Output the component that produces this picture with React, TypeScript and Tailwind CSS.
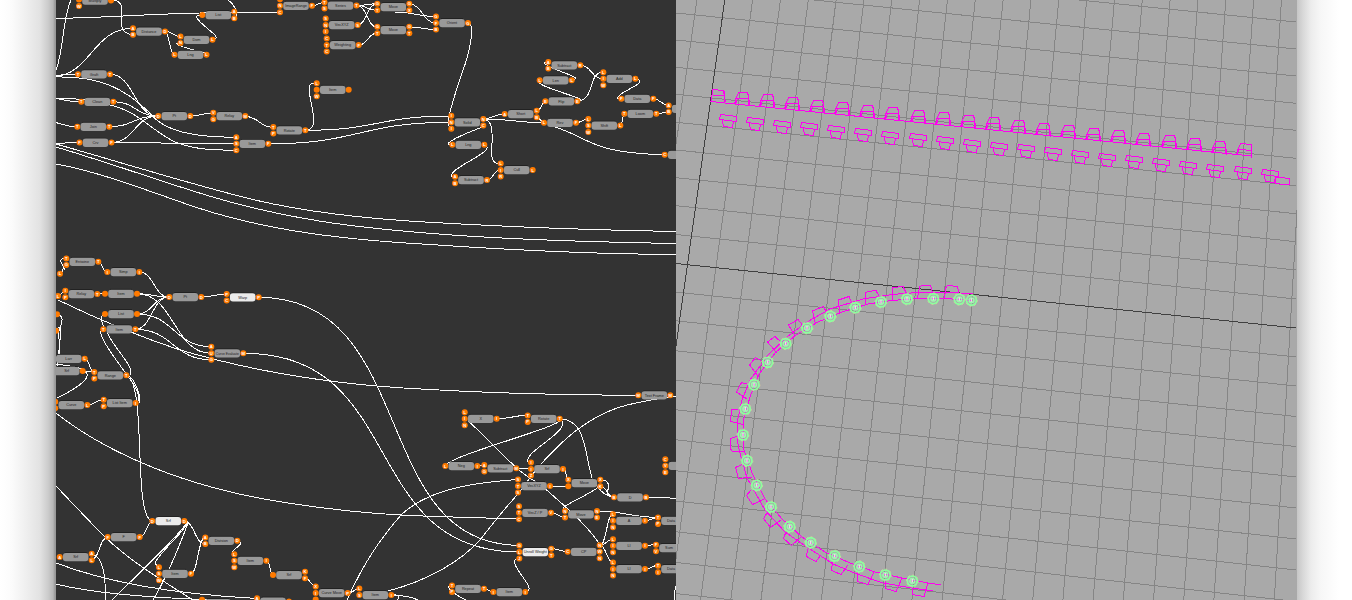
import React from "react";

type GraphNode = { x: number; y: number; t: string; l?: number[]; r?: number[]; p?: string; on?: boolean };

// l / r hold the vertical offsets of the input and output ports; p holds their letters.
const S = [0];
const D = [-3.2, 3.2];
const T = [-6.5, 0, 6.5];

const nodes: GraphNode[] = [
  { x: 95, y: 0.5, t: "Multiply", l: [-1, 5.5], r: S, p: "AWL" },
  { x: 149, y: 31.5, t: "Distance", l: D, r: S, p: "ABD" },
  { x: 218.3, y: 15, t: "List", l: S, r: D, p: " AB" },
  { x: 196.5, y: 39.7, t: "Dom", l: D, r: S, p: "LNL" },
  { x: 190.5, y: 54.7, t: "Lng", l: S, r: S, p: "LL" },
  { x: 94, y: 74.3, t: "Graft", l: S, r: S, p: "TT" },
  { x: 97.3, y: 101.7, t: "Clean", l: S, r: S, p: "TT" },
  { x: 93.3, y: 126.7, t: "Join", l: S, r: S, p: "TT" },
  { x: 95.5, y: 142.6, t: "Crv", l: S, r: S, p: "FF" },
  { x: 174.3, y: 116, t: "Pt", l: S, r: S, p: "DD" },
  { x: 229.3, y: 116, t: "Relay", l: D, r: S, p: "VGM" },
  { x: 289.3, y: 130.3, t: "Rotate", l: D, r: S, p: "TPT" },
  { x: 252.3, y: 143.8, t: "Item", l: T, r: S, p: "ASCF" },
  { x: 332.7, y: 89.7, t: "Item", l: T, r: S, p: "L W " },
  { x: 296, y: 5.7, t: "ImageRange", l: [-6.5, 0, 6.5], r: S, p: "ANCF" },
  { x: 340.5, y: 5.4, t: "Series", l: D, r: S, p: "TST" },
  { x: 341.7, y: 25, t: "VecXYZ", l: T, r: S, p: "SNIS" },
  { x: 342.7, y: 45, t: "Weighting", l: T, r: S, p: "CTCF" },
  { x: 393.3, y: 7, t: "Move", l: D, r: D, p: "GTGX" },
  { x: 393.3, y: 30, t: "Move", l: D, r: D, p: "GTGT" },
  { x: 452, y: 23, t: "Orient", l: T, r: S, p: "GFBG" },
  { x: 467.3, y: 122.3, t: "Solid", l: T, r: D, p: "ININC" },
  { x: 468.3, y: 144.7, t: "Lng", l: S, r: S, p: "LL" },
  { x: 471, y: 180, t: "Subtract", l: D, r: S, p: "ABR" },
  { x: 516.7, y: 170, t: "Cull", l: T, r: S, p: "LIRL" },
  { x: 520.7, y: 114, t: "Short", l: S, r: D, p: "ALB" },
  { x: 564.3, y: 65.3, t: "Subtract", l: D, r: S, p: "ABR" },
  { x: 555.7, y: 80.3, t: "Len", l: S, r: S, p: "LL" },
  { x: 561.3, y: 101.3, t: "Flip", l: S, r: S, p: "EE" },
  { x: 560, y: 122.7, t: "Rev", l: S, r: S, p: "LF" },
  { x: 619.3, y: 78.7, t: "Add", l: T, r: S, p: "LIWL" },
  { x: 637.3, y: 98.7, t: "Data", l: S, r: S, p: "FF" },
  { x: 640.3, y: 113.7, t: "Loom", l: S, r: S, p: "TT" },
  { x: 604.3, y: 125.5, t: "Shift", l: T, r: S, p: "LSWL" },
  { x: 684.7, y: 108.7, t: "", l: D, p: "AB" },
  { x: 680.7, y: 154.7, t: "", l: S, p: "C" },
  { x: 82.3, y: 261.7, t: "Entwine", l: D, r: S, p: "TGT" },
  { x: 123.3, y: 272, t: "Simp", l: S, r: S, p: "II" },
  { x: 81.3, y: 294, t: "Relay", l: D, r: S, p: "IPT" },
  { x: 121, y: 293.7, t: "Item", l: S, r: S, p: "  " },
  { x: 185.3, y: 297, t: "Pt", l: S, r: S, p: "DD" },
  { x: 242.7, y: 297.3, t: "Warp", l: D, r: S, p: "PCP", on: true },
  { x: 121, y: 314, t: "List", l: S, r: S, p: "  " },
  { x: 119.3, y: 329.3, t: "Item", l: S, r: S, p: "TT" },
  { x: 227.3, y: 353.3, t: "Curve Evaluate", l: T, r: S, p: "AUGM" },
  { x: 68.7, y: 358.7, t: "Larr", r: S, p: "L" },
  { x: 66.7, y: 371, t: "Srf", r: S, p: " " },
  { x: 110.3, y: 375.3, t: "Range", l: D, r: S, p: "TPT" },
  { x: 71.3, y: 405, t: "Curve", l: D, r: S, p: "  L" },
  { x: 119.7, y: 403, t: "List Item", l: D, r: S, p: "TPI" },
  { x: 168.3, y: 521, t: "Srf", l: S, r: S, p: "DD", on: true },
  { x: 123.7, y: 537, t: "F", l: S, r: S, p: "FF" },
  { x: 75.7, y: 557, t: "Srf", l: S, r: D, p: "AAL" },
  { x: 175, y: 573.7, t: "Item", l: T, r: S, p: "LSWF" },
  { x: 221.3, y: 540.7, t: "Division", l: D, r: S, p: "ABD" },
  { x: 250.3, y: 560.7, t: "Item", l: T, r: S, p: "LSWI" },
  { x: 289, y: 575, t: "Srf", l: S, r: D, p: " KF" },
  { x: 331.7, y: 593, t: "Curve Move", l: T, r: S, p: "XI P" },
  { x: 375.3, y: 595, t: "Item", l: [-6.5, 0], r: S, p: "LSI" },
  { x: 273, y: 601.5, t: "", l: D, r: S, p: "A  " },
  { x: 218, y: 603, t: "", l: D, r: S, p: "   " },
  { x: 654.3, y: 395.3, t: "Text Frame", l: S, r: S, p: "MM" },
  { x: 480.7, y: 418.7, t: "X", l: T, r: S, p: "LINI" },
  { x: 543.7, y: 418.7, t: "Rotate", l: D, r: S, p: "TPT" },
  { x: 461.3, y: 466, t: "Neg", l: S, r: S, p: "LI" },
  { x: 500.3, y: 468.3, t: "Subtract", l: D, r: S, p: "AGM" },
  { x: 547, y: 469, t: "Srf", l: T, r: S, p: "IIZI" },
  { x: 534, y: 486, t: "VecXYZ", l: T, r: S, p: "STSI" },
  { x: 584.3, y: 483, t: "Move", l: D, r: D, p: "X XK" },
  { x: 630, y: 497.3, t: "D", l: S, r: S, p: "BB" },
  { x: 535, y: 512.7, t: "VecZ / P", l: T, r: S, p: "STCV" },
  { x: 581, y: 514.3, t: "Move", l: D, r: D, p: "NTNE" },
  { x: 629, y: 520.7, t: "A", l: T, r: S, p: "LINI" },
  { x: 629, y: 545.7, t: "LI", l: T, r: S, p: "LINI" },
  { x: 629, y: 569, t: "LI", l: T, r: S, p: "LINI" },
  { x: 535.3, y: 552, t: "Unroll Weight", l: T, r: D, p: "GLJGT", on: true },
  { x: 583.7, y: 551.7, t: "CP", l: S, r: T, p: "CNWN" },
  { x: 468, y: 588.7, t: "Repeat", l: D, r: S, p: "TPT" },
  { x: 509.3, y: 592, t: "Item", l: S, r: S, p: "II" },
  { x: 674, y: 520.7, t: "Data", l: D, p: "TP" },
  { x: 672, y: 548, t: "Sum", l: D, p: "FV" },
  { x: 674, y: 569, t: "Data", l: D, p: "TI" },
  { x: 681.3, y: 465.7, t: "", l: T, p: "CVE" },
];

const strayPorts: [number, number, string][] = [
  [60, 273.7, "L"],
  [58, 296, "L"],
  [57, 314.3, ""],
  [56, 330.7, ""],
];

// Wires that run left to right with level ends.
const links: [number, number, number, number][] = [
  [165, 31.3, 180, 36.5],
  [165, 31.3, 174, 54.7],
  [50, 77, 133, 28.3],
  [40, 76, 78, 74.3],
  [40, 97, 81, 101.7],
  [40, 120, 77, 126.7],
  [40, 144, 79, 142.6],
  [110, 74.3, 158, 116],
  [113, 101.7, 158, 116],
  [109, 126.7, 158, 116],
  [111, 142.6, 158, 116],
  [111, 142.6, 236, 143.8],
  [190, 116, 213, 113],
  [245, 116.3, 273, 127.3],
  [312, 5.7, 324, 2.5],
  [357, 5.4, 377, 3.8],
  [357, 5.4, 377, 10.4],
  [357, 5.4, 377, 27],
  [357, 25, 377, 3.8],
  [359, 45, 377, 33],
  [409, 4, 436, 23],
  [409, 27, 436, 29.5],
  [395, 12, 436, 16.5],
  [305, 130.3, 451, 116],
  [268, 143.8, 451, 122.3],
  [483, 119, 504, 114],
  [483, 119, 545, 122.7],
  [487, 180, 500, 170],
  [537, 110.5, 546, 101.3],
  [537, 117.5, 544, 122.7],
  [580, 65.3, 603, 78.7],
  [576, 122.7, 588, 119],
  [620, 125.5, 625, 113.7],
  [653, 98.7, 669, 105.5],
  [656, 113.7, 669, 112],
  [60, 273.7, 66, 264.7],
  [98, 261.7, 107, 272],
  [58, 296, 65, 291],
  [97, 294, 105, 293.7],
  [139, 272, 169, 297],
  [137, 293.7, 169, 297],
  [137, 314, 169, 297],
  [135, 329.3, 169, 297],
  [137, 293.7, 211, 353.3],
  [137, 314, 211, 346.7],
  [135, 329.3, 211, 359.7],
  [201, 297, 227, 294],
  [85, 358.7, 94, 372],
  [83, 371, 94, 372],
  [87, 405, 104, 399.7],
  [140, 537, 153, 521],
  [184, 521, 205, 543.7],
  [191, 573.7, 205, 537.3],
  [267, 560.7, 273, 575],
  [305, 578.5, 316, 586.3],
  [348, 593, 360, 588.5],
  [91, 560, 108, 537],
  [497, 418.7, 528, 415.3],
  [477, 466, 484, 465.3],
  [516, 468.3, 531, 469],
  [564, 469, 568, 479.7],
  [550, 486, 568, 486],
  [600, 486, 614, 497.3],
  [646, 497.3, 690, 498.5],
  [551, 512.7, 565, 517.5],
  [597, 511, 658, 517.5],
  [645, 520.7, 658, 517.5],
  [645, 545.7, 656, 544.5],
  [645, 569, 658, 565.5],
  [600, 545.3, 613, 514],
  [600, 545.3, 613, 539.3],
  [600, 545.3, 613, 562.5],
  [551, 548.7, 568, 551.7],
  [484, 588.7, 494, 592],
];

const wires: string[] = [
  "M56 70 C64 50 62 20 71 0",
  "M111 0 C127 0 120 14 122 27 C123 32 128 34.5 133 34.5",
  "M56 18.5 C120 17 150 14 200 13 L280 12.3",
  "M228 0 C234 4 241 17 234 18",
  "M212 39.5 C226 39 202 27 197 18 C196 15 198 15 202 15",
  "M207 54.7 C219 54 176 48 176 43 L180 43",
  "M56 77 C100 76 124 88 150 113 C165 133 198 137 236 137.3",
  "M110 105 C140 112 150 130 175 142 C195 150 215 150 236 150.3",
  "M56 98 C78 98 92 100 110 105",
  "M305 130.3 C322 130 309 104 309 87 C310 83 313 83 317 83",
  "M468 23 C476 24 469 55 463 70 C455 95 449 110 448 124 L451 129",
  "M483 119 C496 120 491 140 492 157 C493 163 496 163.5 500 163.5",
  "M483 126 C498 122 449 138 448 144 L453 145",
  "M484 144.7 C500 150 452 166 451 176 L455 177",
  "M571 80.3 C590 78 544 69 544 62 L549 62",
  "M577 101.3 C596 100 587 73 603 72",
  "M577 101.3 C596 100 537 88 537 80.3 L540 80.3",
  "M635 78.7 C653 82 616 92 617 98.7 L621 98.7",
  "M555 127 C590 138 590 153 665 154.7",
  "M56 144 C130 165 200 187 255 200 C310 213 370 219 430 222.3 C510 227 590 230 676 231.5",
  "M56 147 C120 166 170 185 223 200 C290 219 350 227 430 233.3 C510 240 590 242 676 243.5",
  "M56 164 C95 171 135 186 175 200 C250 228 330 239 430 244.5 C510 250 590 254 676 254.5",
  "M258 297.3 C420 297 368 545 519 545.3",
  "M244 353.3 C408 353 358 552 519 552",
  "M58 300 C110 325 150 340 177 349 C250 371 330 385 430 389.5 C500 393.5 570 395 638 395.3",
  "M388 591 C430 580 462 560 480 540 C497 518 507 506 518 494 C526 484 533 473 540 465 C553 451 563 440 577 430 C590 420 603 413 617 408 C635 402 650 400 676 396",
  "M347 600 C365 560 382 537 401 515 C420 497 450 484 518 479.5",
  "M56 413 C80 432 110 449 140 462 C190 484 240 496 290 503.3 C340 511 385 515 430 516.3 L519 519",
  "M66 258.3 C57 258 62 264 65 270",
  "M56 314 C67 315 60 327 58 334 C60 342 61 354 57 358",
  "M56 331 C65 316 58 354 56 375",
  "M104 314 C98 318 104 325 104 329.3",
  "M103 329.3 C92 331 125 371 134 385 C140 395 140 401 136 403",
  "M107 332 C112 346 136 368 130 375",
  "M127 375.3 C135 377 142 400 139 403",
  "M130 378 C146 400 133 521 153 521",
  "M83 371 C95 375 80 387 57 398",
  "M56 364 C68 366 77 366 84 370",
  "M56 486 C75 506 90 522 105 537 C125 556 145 570 193 600",
  "M56 563 C90 576 150 593 258 598.5",
  "M56 584 C95 594 160 599 250 601",
  "M92 554 C104 558 105 575 106 600",
  "M184 521 C197 522 155 555 155 564 L159 567",
  "M187 523 C170 545 140 572 112 600",
  "M188 523 C178 550 165 580 153 600",
  "M237 540.7 C248 544 231 548 232 554",
  "M394 595 C402 594 397 600 397 602",
  "M394 595 C406 596 414 598 418 600",
  "M560 418.7 C570 425 449 455 445 466",
  "M560 418.7 C575 430 523 451 528 462",
  "M560 418.7 C586 420 584 450 592 478 C596 487 605 497 614 497.3",
  "M468 421 C500 449 515 472 540 484 C563 505 586 523 600 545",
  "M600 486 C585 498 555 507 565 511",
  "M598 479.7 C615 479 606 492 607 496",
  "M525 592 C540 590 508 566 516 559",
  "M452 585 C442 587 458 596 466 600",
  "M674 600 C675 593 674 592 676 586",
];

function linkPath([x1, y1, x2, y2]: [number, number, number, number]) {
  const m = (x1 + x2) / 2;
  return `M${x1} ${y1} C${m} ${y1} ${m} ${y2} ${x2} ${y2}`;
}

function Port({ x, y, c }: { x: number; y: number; c?: string }) {
  return (
    <g>
      <circle cx={x} cy={y} r={3} fill="#ff7a00" />
      {c && c !== " " ? (
        <text x={x} y={y + 1.5} textAnchor="middle" fontSize={4.2} fontWeight={700} fill="#ffffff">
          {c}
        </text>
      ) : null}
    </g>
  );
}

function NodeGraph() {
  return (
    <svg className="block h-full w-full font-['Liberation_Sans',sans-serif]" viewBox="56 0 620 600">
      <g stroke="#ffffff" strokeWidth={1} fill="none" shapeRendering="crispEdges">
        {wires.map((d, i) => (
          <path key={`w${i}`} d={d} />
        ))}
        {links.map((l, i) => (
          <path key={`l${i}`} d={linkPath(l)} />
        ))}
      </g>
      {strayPorts.map(([x, y, c]) => (
        <Port key={`${x}-${y}`} x={x} y={y} c={c} />
      ))}
      {nodes.map((n, i) => {
        const l = n.l ?? [];
        const r = n.r ?? [];
        const p = n.p ?? "";
        return (
          <g key={i}>
            <rect x={n.x - 11} y={n.y - 4.8} width={22} height={2} fill="#1e1e1e" />
            <rect x={n.x - 12.8} y={n.y - 4} width={25.6} height={8.3} rx={3} fill={n.on ? "#ebebeb" : "#999999"} />
            <text
              x={n.x > 670 ? n.x - 3 : n.x}
              y={n.y + 1.4}
              textAnchor="middle"
              fontSize={3.8}
              fill="#222222"
              textLength={n.t.length > 10 ? 23 : undefined}
              lengthAdjust="spacingAndGlyphs"
            >
              {n.t}
            </text>
            {l.map((dy, k) => (
              <Port key={`i${k}`} x={n.x - 16} y={n.y + dy} c={n.y + dy > 2 ? p[k] : undefined} />
            ))}
            {r.map((dy, k) => (
              <Port key={`o${k}`} x={n.x + 16} y={n.y + dy} c={n.y + dy > 2 ? p[l.length + k] : undefined} />
            ))}
          </g>
        );
      })}
    </svg>
  );
}

const rows: [number, number][] = [
  [-41, 22], [-14, 49], [13, 76], [40, 103.3], [67.3, 130.3], [94.3, 158.3], [122.3, 185.7], [150, 213.7],
  [177.7, 241.7], [205.7, 270], [234.5, 299], [292.1, 357], [320.8, 386], [350.8, 416.5], [380.2, 446.5],
  [409.8, 477], [439.8, 508], [470.8, 539], [501, 570], [531.8, 601.5], [562.4, 633], [593.5, 664],
];

const columns = Array.from({ length: 28 }, (_, k) => k - 1).filter((i) => i !== 0);
const columnX = (i: number, y: number) => 716.3 - 0.141 * (y - 60) + i * (28.07 + 0.00394 * (y - 60));

const hats = Array.from({ length: 22 }, (_, i) => [Math.round(711.7 + 25.1 * i) + 0.5, Math.round(89.3 + 2.56 * i) + 0.5]);
const tees = Array.from({ length: 21 }, (_, i) => [Math.round(719 + 27.08 * i) + 0.5, Math.round(114 + 2.76 * i) + 0.5]);

const rings: [number, number][] = [
  [971.5, 300.3], [959.3, 299.3], [933.3, 298.7], [907, 299], [881, 302], [855.3, 307.7], [830.3, 316.3],
  [807, 328], [785.7, 343.7], [767.7, 362.3], [754, 384.7], [745.3, 409], [743, 435], [747, 460.7],
  [756.7, 485.3], [771, 507], [789.7, 526.7], [810.7, 542.7], [834.7, 556], [859.3, 566.7], [885.3, 575],
  [912.3, 581],
];

const inner =
  "971,300.5 959,299.5 945,298.5 920,298.5 891,300.5 868,304 842,312 818,322 796,335 776,352 759,374 750,397 744,418 743,435 744,450 752,473 765,499 782,519 802,537 825,552 850,563 875,572 902,578 928,583 941,585";
const outer =
  "973,293.5 945,292.5 917,292.5 892,294.5 863,299 830,309 807,322 787,337 768,355 750,380 742,400 737,423 737,440 740,453 747,478 765,510 785,532 807,547 833,564 857,574 883,583 912,588 933,591";

const blocks = [
  "944.5,298 946,287.5 947.5,285.5 957.5,286.5 959,293", "917.5,298 919.5,287 921.5,285.5 930.5,285.5 932.5,293",
  "892,300.5 892.5,287.5 903,286.5 906.5,293.5", "865.5,305 865.5,293 868,291.5 876,290.5 879.5,297",
  "839.5,312 838.5,300 849,296.5 853,305", "815.5,324 812.5,311 823,306.5 828,314",
  "795,336 788.5,325 798,319.5 804,327", "777,353 767.5,342 775,336.5 782,343", "758,376 749.5,365 755.5,357.5 763,362",
  "747,399 736.5,392 741.5,382.5 747,384", "743.5,424.5 730.5,421.5 731.5,410 738,409.5",
  "744,451.5 732,451 730.5,449 730.5,438.5 737,436.5", "752,477 738.5,478.5 735.5,467.5 743,464",
  "764,499 752.5,504.5 746.5,495.5 751,490", "781,520 770.5,527.5 763.5,518.5 767,513",
  "801,537 791.5,545.5 783.5,538.5 786,532", "821,555 816,561.5 806.5,556.5 807.5,549",
  "848,565 841,574.5 831.5,570.5 832.5,562", "874,572 868,584.5 857.5,581.5 857.5,572",
  "902,578 896,591.5 885.5,588.5 885.5,581", "928,583 924,596.5 912.5,594.5 912.5,588",
];

function Viewport() {
  return (
    <svg className="block h-full w-full" viewBox="676 0 621 600">
      <g stroke="#858585" strokeWidth={1} shapeRendering="crispEdges">
        {rows.map(([a, b], i) => (
          <line key={i} x1={676} y1={a} x2={1296} y2={b} />
        ))}
        {columns.map((i) => (
          <line key={i} x1={columnX(i, 0)} y1={0} x2={columnX(i, 600)} y2={600} />
        ))}
        <g stroke="#404040">
          <line x1={676} y1={263.5} x2={1296} y2={328} />
          <line x1={columnX(0, 0)} y1={0} x2={columnX(0, 600)} y2={600} />
        </g>
      </g>
      <g stroke="#ff00f0" strokeWidth={1} fill="none" shapeRendering="crispEdges">
        <path d="M710.5 101.5 L1251.5 156" />
        {hats.map(([x, y], i) => (
          <path
            key={i}
            d={
              i === 0
                ? `M${x - 1} ${y + 12} L${x} ${y} L${x + 11} ${y + 1} L${x + 13} ${y + 13} M${x} ${y + 6} L${x + 12} ${y + 6} M${x + 12} ${y + 1} V${y + 13}`
                : i === 21
                  ? `M${x - 3} ${y + 12} L${x - 2} ${y + 7} L${x + 1} ${y} L${x + 12} ${y + 1} L${x + 12} ${y + 14} M${x} ${y + 6} L${x + 12} ${y + 7} M${x - 1} ${y + 6} L${x - 2} ${y + 12}`
                  : `M${x - 3} ${y + 12} L${x - 1.5} ${y + 6} L${x + 1} ${y} L${x + 10} ${y} L${x + 11.5} ${y + 7} L${x + 12.5} ${y + 13} M${x - 2} ${y + 12} L${x} ${y + 6} L${x + 11} ${y + 6} M${x + 11} ${y + 1} V${y + 12}`
            }
          />
        ))}
        {tees.map(([x, y], i) => (
          <path
            key={i}
            d={`M${x + 1} ${y} L${x + 17} ${y + 2} L${x + 17} ${y + 7} L${x} ${y + 5} Z M${x + 3} ${y + 6} L${x + 4} ${y + 12} L${x + 13} ${y + 13} L${x + 14} ${y + 7}`}
          />
        ))}
        <path d="M1275 177 L1289.5 178.5 V185 L1275 183.5 Z" />
        <polyline points={inner} />
        <polyline points={outer} />
        {blocks.map((b, i) => (
          <polyline key={i} points={b} />
        ))}
      </g>
      {rings.map(([x, y], i) => (
        <g key={i} fill="none">
          <circle cx={x} cy={y} r={5.9} stroke="#e3cf9c" strokeWidth={0.9} strokeDasharray="2 2.5" />
          <circle cx={x} cy={y} r={4.9} stroke="#8cff9e" strokeWidth={1.9} />
          <circle cx={x} cy={y} r={2.3} stroke="#9df7b0" strokeWidth={1.7} />
          <path d={`M${x} ${y - 2} V${y + 1.5}`} stroke="#f0d8e8" strokeWidth={1.4} />
        </g>
      ))}
    </svg>
  );
}

export default function App() {
  return (
    <div className="flex h-[600px] w-[1352px] overflow-hidden bg-white">
      <div className="w-14 shrink-0 bg-[linear-gradient(to_right,#ffffff_0px,#fbfbfb_12px,#efefef_26px,#e2e2e2_40px,#cccccc_48px,#b8b8b8_53px,#999999_55px)]" />
      <div className="w-[620px] shrink-0 overflow-hidden bg-[#333333]">
        <NodeGraph />
      </div>
      <div className="w-[621px] shrink-0 overflow-hidden bg-[#a9a9a9]">
        <Viewport />
      </div>
      <div className="flex-1 bg-[linear-gradient(to_right,#c6c6c6_0px,#d8d8d8_6px,#ececec_14px,#f7f7f7_24px,#ffffff_42px)]" />
    </div>
  );
}
